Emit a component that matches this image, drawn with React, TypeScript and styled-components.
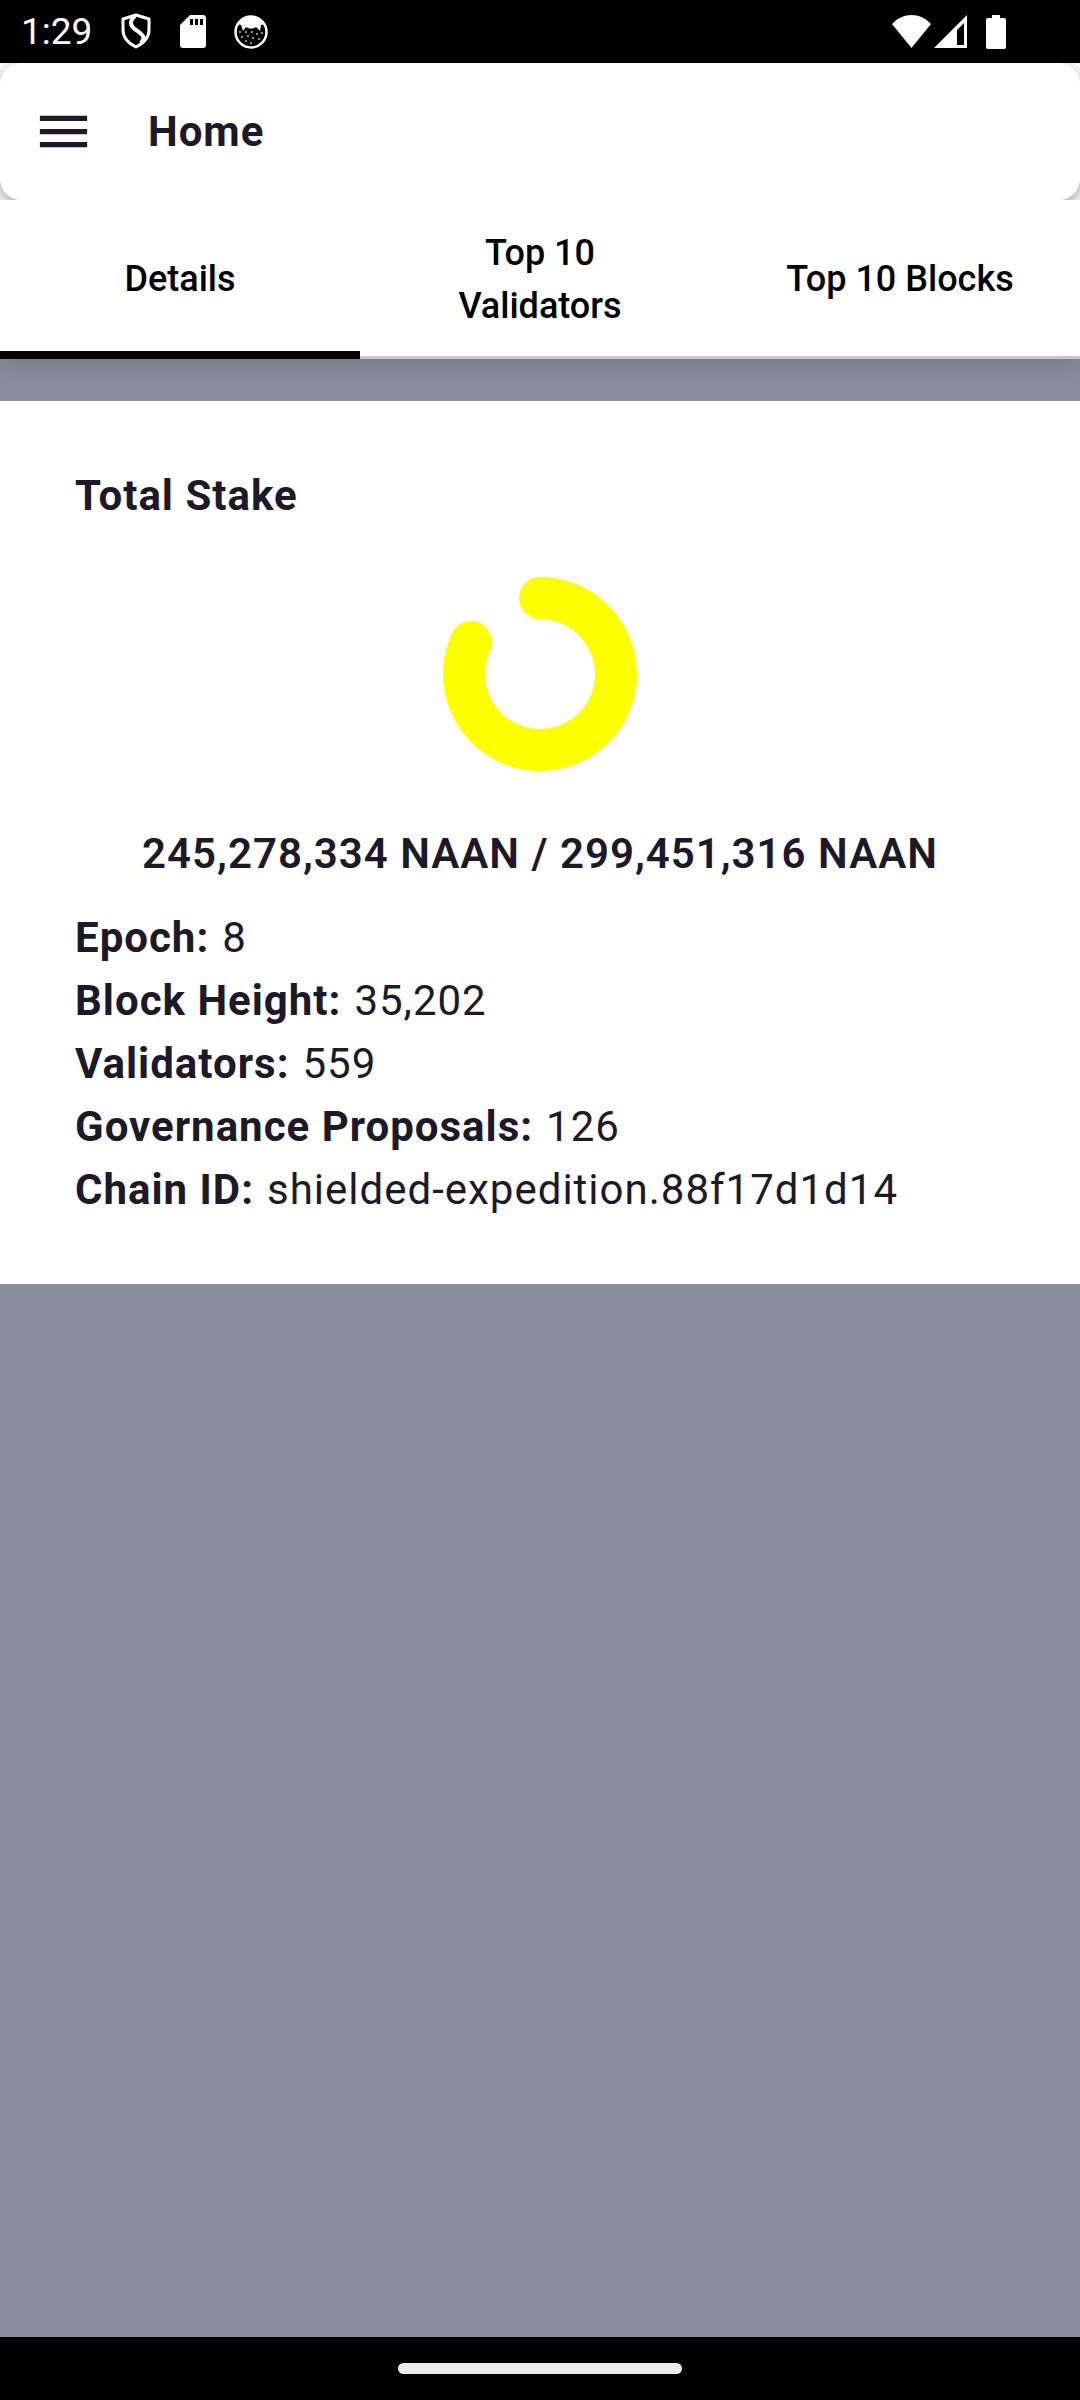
import React, { useState } from "react";
import styled, { createGlobalStyle } from "styled-components";

const GlobalStyle = createGlobalStyle`
  *, *::before, *::after { box-sizing: border-box; }
  body { margin: 0; background: #898f9c; }
`;

const ink = "#1d182a";

const Screen = styled.div`
  min-height: 100vh;
  display: flex;
  flex-direction: column;
  background: #898f9c;
  color: ${ink};
  font-family: Roboto, "Liberation Sans", sans-serif;
  font-size: 42px;
  line-height: 63px;
  letter-spacing: 1px;
`;

const StatusBar = styled.div`
  height: 63px;
  display: flex;
  align-items: center;
  justify-content: space-between;
  padding: 0 74px 0 21px;
  background: #000;
  color: #fff;
`;

const StatusGroup = styled.div<{ $gap: number }>`
  display: flex;
  align-items: center;
  gap: ${(p) => p.$gap}px;
  svg { display: block; }
`;

const Clock = styled.time`
  font-size: 37px;
  letter-spacing: 0;
`;

const Top = styled.div`
  position: relative;
  background: #fff;
  box-shadow: 0 6px 24px rgba(0, 0, 0, 0.16);
`;

const BarFrame = styled.div`
  overflow: hidden;
  background: #fff;
`;

const AppBar = styled.header`
  height: 137px;
  display: flex;
  align-items: center;
  gap: 53px;
  padding: 0 32px;
  border-radius: 21px;
  background: #fff;
  box-shadow: 0 5px 16px rgba(40, 30, 45, 0.46);
`;

const MenuButton = styled.button`
  display: flex;
  padding: 0;
  border: 0;
  background: none;
  color: inherit;
`;

const Title = styled.h1`
  margin: 0;
  font-size: inherit;
  font-weight: 700;
`;

const Tabs = styled.div`
  display: grid;
  grid-template-columns: repeat(3, 1fr);
  box-shadow: inset 0 -3px #cbc5d2;
`;

const Tab = styled.button<{ $active: boolean }>`
  min-height: 159px;
  padding: 0 42px;
  border: 0;
  background: none;
  box-shadow: ${(p) => (p.$active ? "inset 0 -8px #000" : "none")};
  color: #000;
  font-family: inherit;
  font-size: 36px;
  font-weight: 500;
  line-height: 53px;
  text-align: center;
`;

const Card = styled.main`
  position: relative;
  margin-top: 42px;
  padding: 63px 75px;
  display: flex;
  flex-direction: column;
  background: #fff;
`;

const CardTitle = styled.h2`
  margin: 0 0 16px;
  font-size: inherit;
  font-weight: 700;
`;

const Ring = styled.svg`
  display: block;
  align-self: center;
`;

const Amount = styled.p`
  margin: 17px 0 21px;
  text-align: center;
  font-weight: 600;
`;

const Facts = styled.dl`
  margin: 0;
`;

const Fact = styled.div`
  display: flex;
  gap: 13px;
  dt { font-weight: 700; }
  dd { margin: 0; }
`;

const NavBar = styled.footer`
  height: 63px;
  margin-top: auto;
  display: flex;
  align-items: center;
  justify-content: center;
  background: #000;
`;

const Handle = styled.div`
  width: 284px;
  height: 11px;
  border-radius: 6px;
  background: #ebebeb;
`;

const ShieldIcon = () => (
  <svg width="32" height="37" viewBox="0 0 32 37" fill="none" stroke="#fff" strokeWidth="4" strokeLinejoin="round">
    <path strokeWidth="3" d="M16 2 L29 6 V17 C29 25 24 30 16 34 C8 30 3 25 3 17 V6 Z" />
    <path d="M15 3 C9 8 10 13 16 17 C23 22 26 24 21 30" />
  </svg>
);

const SdCardIcon = () => (
  <svg width="26" height="33" viewBox="0 0 26 33">
    <path fill="#fff" d="M10 0 H23 a3 3 0 0 1 3 3 V30 a3 3 0 0 1 -3 3 H3 a3 3 0 0 1 -3 -3 V10 Z" />
    <path fill="#000" d="M10 4h3v6h-3zM15 4h3v6h-3zM20 4h3v6h-3z" />
  </svg>
);

const CatIcon = () => (
  <svg width="34" height="34" viewBox="0 0 34 34">
    <circle cx="17" cy="17" r="15.500" fill="#000" stroke="#fff" strokeWidth="2.500" />
    <path fill="#fff" d="M3 9 C6 4 11 1 17 1 C23 1 28 4 31 9 L27 10 L26 16 L22 12 C19 14 15 14 12 12 L9 16 L7 10 Z" />
    <g fill="#bbb">
      <circle cx="6" cy="17" r="1" /><circle cx="12" cy="17" r="1" /><circle cx="18" cy="17" r="1" />
      <circle cx="28" cy="18" r="1" /><circle cx="23" cy="19" r="1" /><circle cx="8" cy="22" r="1" />
      <circle cx="14" cy="21" r="1" /><circle cx="19" cy="23" r="1" /><circle cx="25" cy="24" r="1" />
      <circle cx="12" cy="26" r="1" /><circle cx="17" cy="28" r="1" />
    </g>
  </svg>
);

const WifiIcon = () => (
  <svg width="39" height="33" viewBox="0 0 39 33">
    <path fill="#fff" d="M0 9 C11 -3 28 -3 39 9 L19.500 33 Z" />
  </svg>
);

const SignalIcon = () => (
  <svg width="33" height="33" viewBox="0 0 33 33">
    <path fill="#fff" fillRule="evenodd" d="M33 0 V33 H0 Z M30 8 L23 15 V30 H30 Z" />
  </svg>
);

const BatteryIcon = () => (
  <svg width="20" height="34" viewBox="0 0 20 34">
    <path fill="#fff" d="M6 0h8v3h4a2 2 0 0 1 2 2v27a2 2 0 0 1-2 2H2a2 2 0 0 1-2-2V5a2 2 0 0 1 2-2h4z" />
  </svg>
);

const MenuIcon = () => (
  <svg width="63" height="63" viewBox="0 0 24 24" fill="currentColor" aria-hidden="true">
    <path d="M3 18h18v-2H3v2zm0-5h18v-2H3v2zm0-7v2h18V6H3z" />
  </svg>
);

const staked = 245278334;
const supply = 299451316;
const format = (n: number) => n.toLocaleString("en-US");

const facts: [string, string][] = [
  ["Epoch", "8"],
  ["Block Height", "35,202"],
  ["Validators", "559"],
  ["Governance Proposals", "126"],
  ["Chain ID", "shielded-expedition.88f17d1d14"],
];

const tabs = ["Details", "Top 10 Validators", "Top 10 Blocks"];

const StakeRing = ({ share }: { share: number }) => {
  const angle = share * 2 * Math.PI;
  const r = 76;
  const x = 131 + r * Math.sin(angle);
  const y = 131 - r * Math.cos(angle);
  return (
    <Ring width="262" height="262" viewBox="0 0 262 262" role="img" aria-label="Share of supply staked">
      <path
        d={`M131 ${131 - r} A${r} ${r} 0 ${share > 0.5 ? 1 : 0} 1 ${x} ${y}`}
        fill="none"
        stroke="#ffff00"
        strokeWidth="42"
        strokeLinecap="round"
      />
    </Ring>
  );
};

export default function App() {
  const [active, setActive] = useState(0);
  return (
    <Screen>
      <GlobalStyle />
      <StatusBar>
        <StatusGroup $gap={28}>
          <Clock>1:29</Clock>
          <ShieldIcon />
          <SdCardIcon />
          <CatIcon />
        </StatusGroup>
        <StatusGroup $gap={19}>
          <StatusGroup $gap={3}>
            <WifiIcon />
            <SignalIcon />
          </StatusGroup>
          <BatteryIcon />
        </StatusGroup>
      </StatusBar>
      <Top>
        <BarFrame>
          <AppBar>
            <MenuButton type="button" aria-label="Open menu">
              <MenuIcon />
            </MenuButton>
            <Title>Home</Title>
          </AppBar>
        </BarFrame>
        <Tabs role="tablist">
          {tabs.map((label, i) => (
            <Tab
              key={label}
              type="button"
              role="tab"
              aria-selected={i === active}
              $active={i === active}
              onClick={() => setActive(i)}
            >
              {label}
            </Tab>
          ))}
        </Tabs>
      </Top>
      <Card>
        <CardTitle>Total Stake</CardTitle>
        <StakeRing share={staked / supply} />
        <Amount>
          {format(staked)} NAAN / {format(supply)} NAAN
        </Amount>
        <Facts>
          {facts.map(([name, value]) => (
            <Fact key={name}>
              <dt>{name}:</dt>
              <dd>{value}</dd>
            </Fact>
          ))}
        </Facts>
      </Card>
      <NavBar>
        <Handle />
      </NavBar>
    </Screen>
  );
}
